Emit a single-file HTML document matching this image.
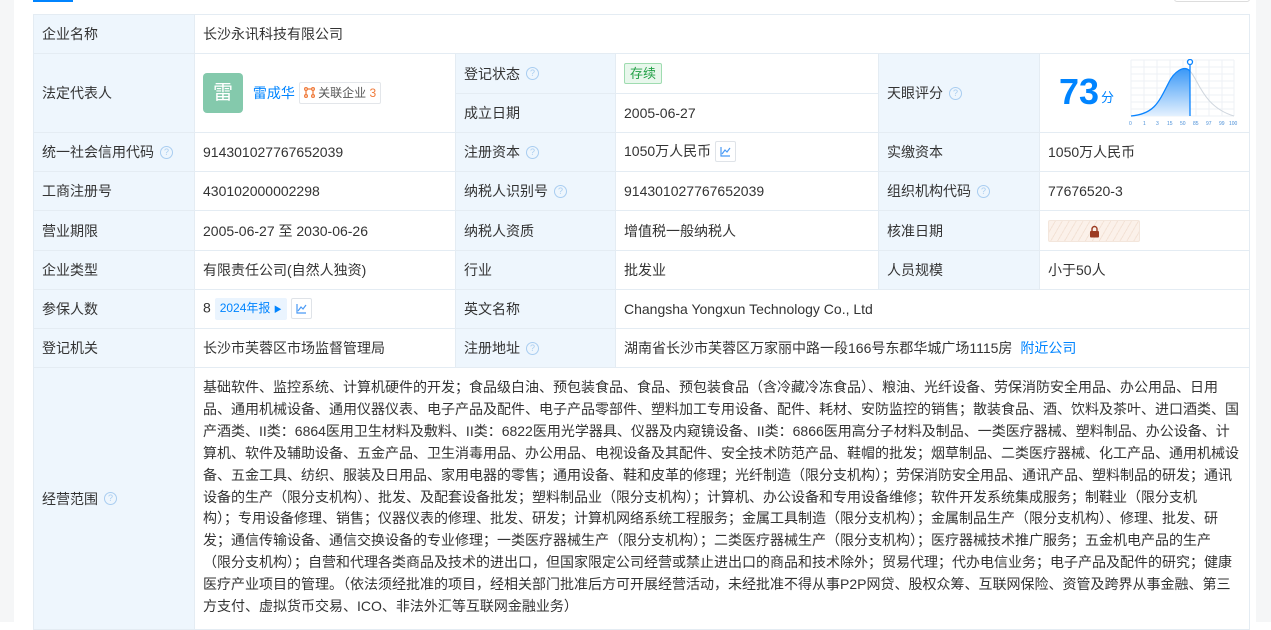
<!DOCTYPE html>
<html><head><meta charset="utf-8"><style>
*{box-sizing:border-box;margin:0;padding:0}
body{width:1271px;height:622px;overflow:hidden;background:#fff;font-family:"Liberation Sans","Noto Sans CJK SC",sans-serif;font-size:14px;color:#333;position:relative}
.lb{position:absolute;left:0;top:0;width:14px;height:622px;background:#f5f6f7}
.rb{position:absolute;left:1256px;top:0;width:15px;height:622px;background:#f5f6f7}
.tab{position:absolute;left:33px;top:0;width:40px;height:2px;background:#0084ff}
.btn{position:absolute;left:1174px;top:-5px;width:76px;height:7px;border:1px solid #ddd;border-radius:3px}
table{position:absolute;left:33px;top:14px;border-collapse:collapse;table-layout:fixed;width:1216px}
td{border:1px solid #e4ecf3;padding:0 8px;vertical-align:middle;white-space:nowrap}
td.l{background:#eef6fd}
.q{display:inline-block;width:13px;height:13px;border:1px solid #a9cdf0;border-radius:50%;color:#a9cdf0;font-size:9px;line-height:11px;text-align:center;vertical-align:middle;margin-left:6px;position:relative;top:-1px}
.blue{color:#0084ff}
.ch{display:inline-block;width:21px;height:21px;border:1px solid #dfe3e8;border-radius:2px;vertical-align:middle;margin-left:4px;position:relative;top:-1px}
.scope{line-height:21.9px;padding:9px 8px 7px;vertical-align:top}
</style></head><body>
<div class="lb"></div><div class="rb"></div><div class="tab"></div><div class="btn"></div>
<table>
<colgroup><col style="width:161px"><col style="width:261px"><col style="width:160px"><col style="width:263px"><col style="width:161px"><col style="width:210px"></colgroup>
<tr style="height:39px"><td class="l">企业名称</td><td colspan="5">长沙永讯科技有限公司</td></tr>
<tr style="height:40px"><td class="l" rowspan="2">法定代表人</td><td rowspan="2">
<span style="display:inline-block;width:40px;height:40px;background:#84c9ac;border-radius:4px;color:#fff;font-size:20px;line-height:40px;text-align:center;vertical-align:middle">雷</span>
<span class="blue" style="margin-left:6px;vertical-align:middle">雷成华</span>
<span style="display:inline-block;border:1px solid #e3e6ea;border-radius:2px;padding:0 4px;height:22px;line-height:20px;font-size:12px;color:#555;vertical-align:middle"><svg width="11" height="11" viewBox="0 0 11 11" style="vertical-align:-1px"><g fill="none" stroke="#f07a3a" stroke-width="1.2"><circle cx="2" cy="2" r="1.4"/><circle cx="9" cy="2" r="1.4"/><circle cx="2" cy="9" r="1.4"/><circle cx="9" cy="9" r="1.4"/><path d="M3.5 2H7.5M2 3.5V7.5M9 3.5V7.5"/></g></svg> 关联企业 <span style="color:#f07a3a">3</span></span>
</td><td class="l">登记状态<span class="q">?</span></td><td><span style="display:inline-block;background:#e8f7ec;border:1px solid #9fdcb0;color:#22a046;font-size:13px;padding:0 5px;line-height:19px;border-radius:2px">存续</span></td>
<td class="l" rowspan="2">天眼评分<span class="q">?</span></td><td rowspan="2" style="padding:0">
<div style="position:relative;height:78px">
<span style="position:absolute;left:19px;top:18px;color:#0084ff;font-size:36px;font-weight:bold;line-height:40px">73</span>
<span style="position:absolute;left:61px;top:33px;color:#0084ff;font-size:13px">分</span>
<svg style="position:absolute;left:88px;top:5px" width="110" height="70" viewBox="0 0 110 70">
<defs><linearGradient id="g" x1="0" y1="0" x2="0" y2="1"><stop offset="0" stop-color="#3a98f7"/><stop offset="1" stop-color="#e4f1fe"/></linearGradient></defs>
<g stroke="#edf1f5" stroke-width="1"><path d="M3 57H106M3 1H106M3 8H106M3 15H106M3 22H106M3 29H106M3 36H106M3 43H106M3 50H106M3 1V57M16 1V57M29 1V57M42 1V57M55 1V57M68 1V57M81 1V57M94 1V57M106 1V57"/></g>
<path d="M62 12 C70 20 75 48 106 57" fill="none" stroke="#cfd6de" stroke-width="1"/>
<path d="M3 57 C25 55 30 45 40 25 C46 12 56 6 62 12 L62 57Z" fill="url(#g)"/>
<path d="M3 57 C25 55 30 45 40 25 C46 12 56 6 62 12" fill="none" stroke="#0a84ff" stroke-width="1.3"/>
<path d="M62 4V57" stroke="#0a84ff" stroke-width="1.3"/>
<circle cx="62" cy="3" r="2.5" fill="#fff" stroke="#0a84ff" stroke-width="1.3"/>
<g fill="#4a8fd8" font-size="5" font-family="Liberation Sans"><text x="1" y="66">0</text><text x="15" y="66">1</text><text x="28" y="66">3</text><text x="39" y="66">15</text><text x="52" y="66">50</text><text x="65" y="66">85</text><text x="78" y="66">97</text><text x="91" y="66">99</text><text x="101" y="66">100</text></g>
</svg></div></td></tr>
<tr style="height:39px"><td class="l">成立日期</td><td>2005-06-27</td></tr>
<tr style="height:39px"><td class="l">统一社会信用代码<span class="q">?</span></td><td>914301027767652039</td><td class="l">注册资本<span class="q">?</span></td><td>1050万人民币<span class="ch"><svg width="19" height="19" viewBox="0 0 19 19"><path d="M5 5V14H14" fill="none" stroke="#4a9af5" stroke-width="1.2"/><path d="M6 12L9 8L11 10L14 6" fill="none" stroke="#4a9af5" stroke-width="1.2"/></svg></span></td><td class="l">实缴资本</td><td>1050万人民币</td></tr>
<tr style="height:39px"><td class="l">工商注册号</td><td>430102000002298</td><td class="l">纳税人识别号<span class="q">?</span></td><td>914301027767652039</td><td class="l">组织机构代码<span class="q">?</span></td><td>77676520-3</td></tr>
<tr style="height:40px"><td class="l">营业期限</td><td>2005-06-27 至 2030-06-26</td><td class="l">纳税人资质</td><td>增值税一般纳税人</td><td class="l">核准日期</td><td><span style="display:inline-block;width:92px;height:22px;background:repeating-linear-gradient(120deg,#fbf1ea 0 5px,#f3e2d6 5px 6px);border:1px solid #f3e6dc;border-radius:2px;vertical-align:middle;text-align:center"><svg width="11" height="13" viewBox="0 0 11 13" style="margin-top:4px"><path d="M3 6V4a2.5 2.5 0 0 1 5 0V6" fill="none" stroke="#9c3b22" stroke-width="1.4"/><rect x="1" y="6" width="9" height="6.5" rx="1" fill="#9c3b22"/></svg></span></td></tr>
<tr style="height:39px"><td class="l">企业类型</td><td>有限责任公司(自然人独资)</td><td class="l">行业</td><td>批发业</td><td class="l">人员规模</td><td>小于50人</td></tr>
<tr style="height:39px"><td class="l">参保人数</td><td>8 <span style="display:inline-block;background:#eaf4fe;color:#0084ff;font-size:12px;padding:0 5px;line-height:21px;border-radius:2px;vertical-align:middle">2024年报 <span style="font-size:8px">▶</span></span><span class="ch"><svg width="19" height="19" viewBox="0 0 19 19"><path d="M5 5V14H14" fill="none" stroke="#4a9af5" stroke-width="1.2"/><path d="M6 12L9 8L11 10L14 6" fill="none" stroke="#4a9af5" stroke-width="1.2"/></svg></span></td><td class="l">英文名称</td><td colspan="3">Changsha Yongxun Technology Co., Ltd</td></tr>
<tr style="height:39px"><td class="l">登记机关</td><td>长沙市芙蓉区市场监督管理局</td><td class="l">注册地址<span class="q">?</span></td><td colspan="3">湖南省长沙市芙蓉区万家丽中路一段166号东郡华城广场1115房 <span class="blue" style="margin-left:4px">附近公司</span></td></tr>
<tr style="height:262px"><td class="l">经营范围<span class="q">?</span></td><td colspan="5" class="scope">基础软件、监控系统、计算机硬件的开发；食品级白油、预包装食品、食品、预包装食品（含冷藏冷冻食品）、粮油、光纤设备、劳保消防安全用品、办公用品、日用<br>品、通用机械设备、通用仪器仪表、电子产品及配件、电子产品零部件、塑料加工专用设备、配件、耗材、安防监控的销售；散装食品、酒、饮料及茶叶、进口酒类、国<br>产酒类、II类：6864医用卫生材料及敷料、II类：6822医用光学器具、仪器及内窥镜设备、II类：6866医用高分子材料及制品、一类医疗器械、塑料制品、办公设备、计<br>算机、软件及辅助设备、五金产品、卫生消毒用品、办公用品、电视设备及其配件、安全技术防范产品、鞋帽的批发；烟草制品、二类医疗器械、化工产品、通用机械设<br>备、五金工具、纺织、服装及日用品、家用电器的零售；通用设备、鞋和皮革的修理；光纤制造（限分支机构）；劳保消防安全用品、通讯产品、塑料制品的研发；通讯<br>设备的生产（限分支机构）、批发、及配套设备批发；塑料制品业（限分支机构）；计算机、办公设备和专用设备维修；软件开发系统集成服务；制鞋业（限分支机<br>构）；专用设备修理、销售；仪器仪表的修理、批发、研发；计算机网络系统工程服务；金属工具制造（限分支机构）；金属制品生产（限分支机构）、修理、批发、研<br>发；通信传输设备、通信交换设备的专业修理；一类医疗器械生产（限分支机构）；二类医疗器械生产（限分支机构）；医疗器械技术推广服务；五金机电产品的生产<br>（限分支机构）；自营和代理各类商品及技术的进出口，但国家限定公司经营或禁止进出口的商品和技术除外；贸易代理；代办电信业务；电子产品及配件的研究；健康<br>医疗产业项目的管理。（依法须经批准的项目，经相关部门批准后方可开展经营活动，未经批准不得从事P2P网贷、股权众筹、互联网保险、资管及跨界从事金融、第三<br>方支付、虚拟货币交易、ICO、非法外汇等互联网金融业务）</td></tr>
</table>
</body></html>
